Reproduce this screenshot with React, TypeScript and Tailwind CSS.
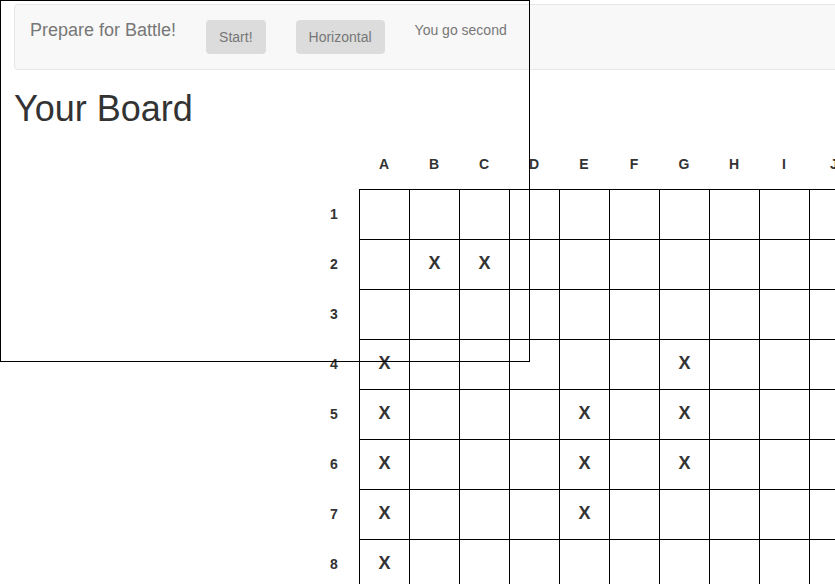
const cols = ["A", "B", "C", "D", "E", "F", "G", "H", "I", "J"];
const rows = [1, 2, 3, 4, 5, 6, 7, 8, 9, 10];

// ship cells, "row-col"
const ships = new Set([
  "2-B", "2-C",
  "4-A", "4-G",
  "5-A", "5-E", "5-G",
  "6-A", "6-E", "6-G",
  "7-A", "7-E",
  "8-A",
]);

const App = () => {
  return (
    <div className="relative w-[835px] h-[584px] overflow-hidden bg-white font-['Liberation_Sans',Arial,sans-serif] text-[#333] text-[14px]">
      {/* nav */}
      <div className="mt-[4px] ml-[14px] mb-[19px] w-[900px] h-[66px] flex items-start gap-[30px] pt-[15px] pl-[15px] bg-[#f8f8f8] border border-[#e7e7e7] rounded-[4px] text-[#777]">
        <span className="text-[18px] leading-[20px]">Prepare for Battle!</span>
        <button className="h-[34px] px-[13px] bg-[#dcdcdc] rounded-[4px] leading-[20px]">
          Start!
        </button>
        <button className="h-[34px] px-[13px] bg-[#dcdcdc] rounded-[4px] leading-[20px]">
          Horizontal
        </button>
        <span className="leading-[20px]">You go second</span>
      </div>

      <h1 className="ml-[14px] mb-[10px] text-[36px] leading-[40px] font-normal">Your Board</h1>

      {/* column letters */}
      <div className="flex ml-[309px]">
        <div className="w-[50px] h-[50px] shrink-0" />
        {cols.map((c) => (
          <div key={c} className="w-[50px] h-[50px] shrink-0 flex items-center justify-center font-bold text-[14px]">
            {c}
          </div>
        ))}
      </div>

      {/* board */}
      <div className="flex ml-[309px]">
        <div className="flex flex-col shrink-0">
          {rows.map((r) => (
            <div key={r} className="w-[50px] h-[50px] flex items-center justify-center font-bold text-[14px]">
              {r}
            </div>
          ))}
        </div>
        <div className="grid grid-cols-[repeat(10,50px)] border-l border-t border-black shrink-0">
          {rows.map((r) =>
            cols.map((c) => (
              <div
                key={r + c}
                className="w-[50px] h-[50px] pb-[3px] border-r border-b border-black flex items-center justify-center font-bold text-[18px]"
              >
                {ships.has(r + "-" + c) ? "X" : ""}
              </div>
            ))
          )}
        </div>
      </div>

      <div className="absolute top-0 left-0 w-[530px] h-[362px] border border-black pointer-events-none" />
    </div>
  );
};

export default App;
